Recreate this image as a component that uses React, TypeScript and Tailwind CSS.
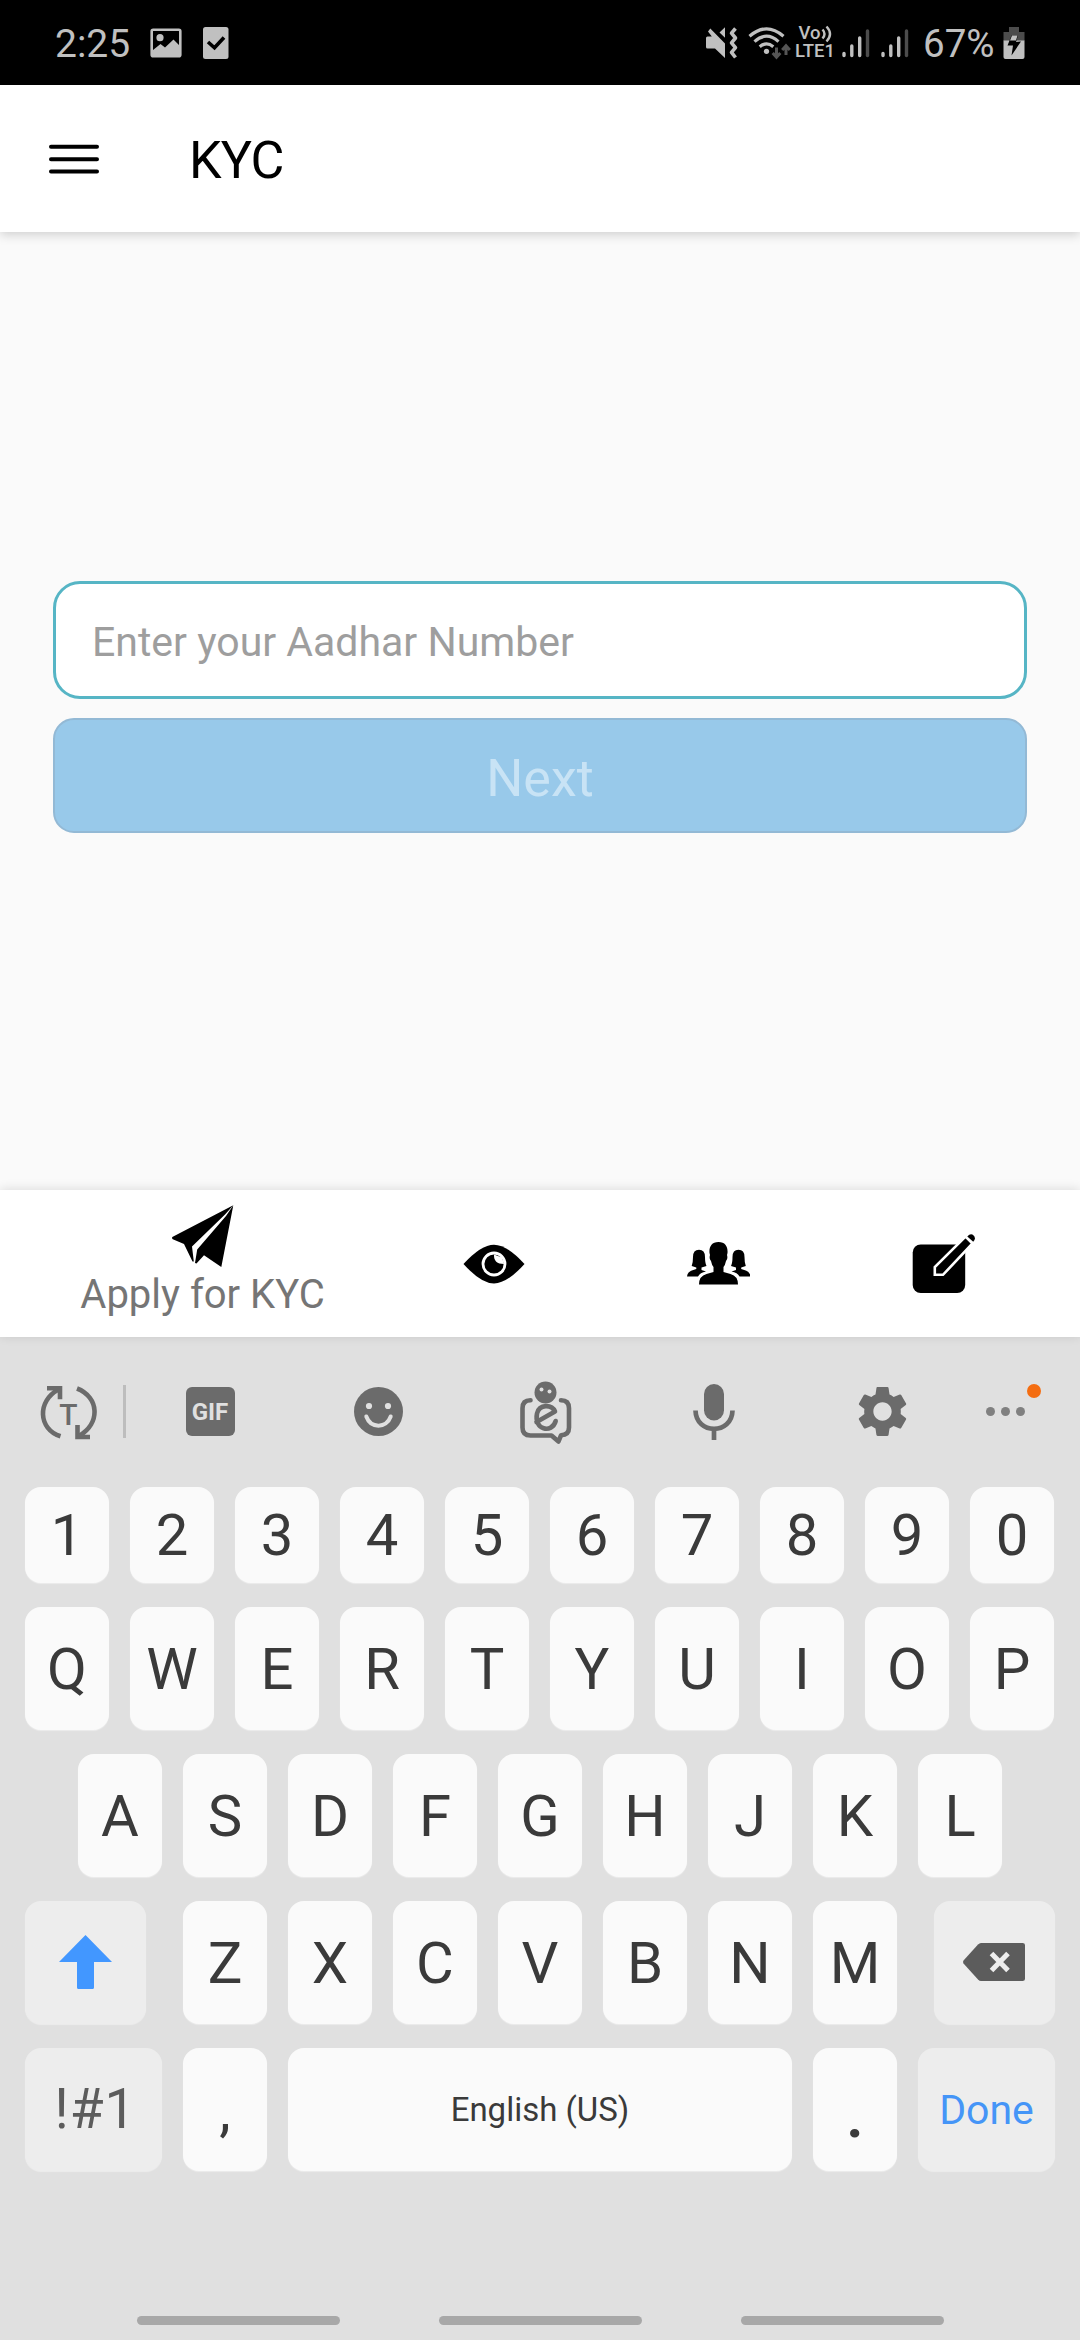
import React from "react";
import { MdSettings } from "react-icons/md";

const SignalBars = ({ className }: { className: string }) => (
  <svg className={className} width="28" height="32" viewBox="0 0 28 32" strokeWidth="3.4" strokeLinecap="round" fill="none">
    <path d="M2 26.500v2M9.800 19v9.500M17.700 11v17.500" stroke="#c0c0c0" />
    <path d="M25.500 4v24.500" stroke="#4c4c4c" />
  </svg>
);

function StatusBar() {
  return (
    <div className="flex h-[85px] items-center bg-black text-[39px] text-[#c0c0c0]">
      <span className="ml-[55px] w-[95px] pt-[3px] leading-none">2:25</span>
      <svg width="32" height="30" viewBox="0 0 32 30">
        <rect x="1.700" y="1.700" width="28.600" height="26.600" rx="1.500" fill="none" stroke="#c0c0c0" strokeWidth="2.600" />
        <circle cx="10" cy="9.700" r="3.600" fill="#c0c0c0" />
        <path d="M3 22l7.500-6 4.500 3.500 8.500-8 6 6V28H3z" fill="#c0c0c0" />
      </svg>
      <svg className="ml-[21px]" width="26" height="32" viewBox="0 0 26 32">
        <rect width="25.500" height="32" rx="2.500" fill="#c0c0c0" />
        <path d="M5 15l6.500 5.800L21 10.500" fill="none" stroke="#000" strokeWidth="3.600" />
      </svg>
      <svg className="ml-[477px]" width="32" height="34" viewBox="0 0 32 34">
        <path d="M1.500 10.500h4.300L2 5.500 4.300 2.500 19 17.500V32L9 22.500H1.500Q0 22.500 0 21v-9q0-1.500 1.500-1.500zM13.500 6.500L19 1.300v10.500z" fill="#c0c0c0" />
        <path d="M29.500 2.500l-4 4.700 4 4.800-4 4.800 4 4.800-4 4.700 4 5.200" fill="none" stroke="#c0c0c0" strokeWidth="3.600" strokeLinejoin="round" />
      </svg>
      <svg className="ml-[10px]" width="43" height="34" viewBox="0 0 43 34">
        <g fill="none" stroke="#c0c0c0" strokeWidth="3.200">
          <path d="M1.500 10.200Q18.500-4.500 35.500 10.200" />
          <path d="M6.500 15.600Q18.500 4.800 30.500 15.600" />
          <path d="M11.700 20.800Q18.500 15 25.300 20.800" />
        </g>
        <circle cx="18.500" cy="25.300" r="2.600" fill="#c0c0c0" />
        <path d="M28.500 21.500v8M24.700 27l3.800 4.200 3.800-4.200M38 29v-8M34.200 24L38 19.800l3.800 4.200" fill="none" stroke="#555" strokeWidth="3" />
      </svg>
      <div className="ml-[3px] flex w-[42px] flex-col items-center text-[18.500px] font-medium leading-[17.500px]">
        <span className="flex items-center">
          Vo
          <svg width="11" height="18" viewBox="0 0 11 18" fill="none" stroke="#c0c0c0" strokeWidth="2.400">
            <path d="M1.500 4.500q4 4.500 0 9M5.500 1.500q7 7.500 0 15" />
          </svg>
        </span>
        <span>LTE1</span>
      </div>
      <SignalBars className="ml-[6px]" />
      <SignalBars className="ml-[11px]" />
      <span className="ml-[14px] w-[79px] pt-[3px] text-[38.500px] leading-none">67%</span>
      <svg className="ml-[1px]" width="22" height="34" viewBox="0 0 22 34">
        <path d="M6 1h10v5h5.500v9H.500V6H6z" fill="#4c4c4c" />
        <path d="M.500 14.500h21V31q0 2-2 2h-17q-2 0-2-2z" fill="#c0c0c0" />
        <path d="M8.500 9.500h6.500l-2 6.500 5-.500L8.500 29.500l1.500-10H4.500z" fill="#000" />
        <path d="M9 9.500h5.500L13 14.500H7z" fill="#c0c0c0" />
      </svg>
    </div>
  );
}

const PlaneIcon = () => (
  <svg width="62" height="62" viewBox="172 1205 62 62">
    <path d="M233.300 1205.300L172.300 1237q-.600 1.300.500 2.300L184 1244l8.500 17.500h1.300l-1.800-15L225 1214.500z" />
    <path d="M233.300 1205.300L221.300 1267 204 1255.300l-7.500 8.200-1.500-.500 2.200-13.500L226 1216z" />
  </svg>
);

const EyeIcon = () => (
  <svg width="62" height="40" viewBox="0 0 62 40">
    <path d="M.500 20Q18 .700 31 .700T61.500 20Q44 39.500 31 39.500T.500 20z" />
    <circle cx="31" cy="20" r="11" fill="none" stroke="#fff" strokeWidth="2.800" />
    <path d="M31 10.500q-.500 9.500 10 9.500l-2-6.500z" fill="#fff" />
  </svg>
);

const PeopleIcon = () => (
  <svg width="63" height="43" viewBox="687 1242 63 43">
    <path d="M691.700 1266q1.300-3 1.300-9 0-7.200 6-7.200t6 7.200q0 6 1.500 9l-5 1.500v2.500l4.500 1.500q-6 1-8 5h-11q.500-5 5.500-6.300l3.800-1.200v-1.500z" />
    <path d="M745.800 1266q-1.300-3-1.300-9 0-7.200-6-7.200t-6 7.200q0 6-1.500 9l5 1.500v2.500l-4.500 1.500q6 1 8 5h11q-.500-5-5.500-6.300l-3.800-1.200v-1.500z" />
    <path d="M718.500 1242c-7 0-9.500 5-9 11l.500 2c-1 3 .2 4.500 1 6q.8 4 2.500 6v5l-7 2q-7.500 2-7.500 10.500h39q0-8.500-7.500-10.500l-7-2v-5q1.700-2 2.500-6c.8-1.500 2-3 1-6l.500-2c.5-6-2-11-9-11z" />
  </svg>
);

const EditIcon = () => (
  <svg width="64" height="60" viewBox="911 1234 64 60">
    <rect x="911.700" y="1244.500" width="52.500" height="48.500" rx="8" />
    <path d="M933.800 1274.800v-7.800L964.500 1236.500l7 7-29.500 31.300z" stroke="#fff" strokeWidth="2.600" />
    <path d="M966.300 1236.400q3.500-3.600 6.300-.900t-.400 6.300z" />
  </svg>
);

function BottomTabs() {
  return (
    <div className="relative flex h-[147px] items-center bg-white px-6 shadow-[0_-1px_10px_rgba(0,0,0,0.12)]">
      <div className="flex h-full w-[357px] flex-col items-center pt-[15px]">
        <PlaneIcon />
        <span className="mt-[4px] text-[40px] leading-[47px] text-[#757575]">Apply for KYC</span>
      </div>
      <div className="flex w-[225px] justify-center"><EyeIcon /></div>
      <div className="flex w-[225px] justify-center"><PeopleIcon /></div>
      <div className="flex w-[225px] justify-center"><EditIcon /></div>
    </div>
  );
}

const G = "#6b6b6b";

function Toolbar() {
  return (
    <div className="flex h-[150px] items-center pb-[1px]">
      <div className="flex w-[126px] items-center">
        <svg className="ml-[40px]" width="57" height="56" viewBox="40 1384 57 56">
          <g fill="none" stroke={G} strokeWidth="4.600">
            <path d="M60.500 1436.300C38 1429 37 1401 58.500 1389.500" />
            <path d="M77 1388.500C99 1397 101 1423 79 1436" />
            <path d="M47 1388.200H60v11" />
            <path d="M90 1437H77.500v-12" />
          </g>
          <text x="68.500" y="1425" textAnchor="middle" fontFamily="Roboto, sans-serif" fontSize="30" fontWeight="500" fill={G}>T</text>
        </svg>
        <div className="ml-[26px] h-[53px] w-[3px] bg-[#bdbdbd]" />
      </div>
      <div className="flex w-[168px] justify-center">
        <div className="flex h-[49px] w-[49px] items-center justify-center rounded-[6px] bg-[#6b6b6b] text-[24px] font-bold leading-none text-[#e0e0e0]">GIF</div>
      </div>
      <div className="flex w-[168px] justify-center">
        <svg width="49" height="49" viewBox="0 0 49 49">
          <circle cx="24.500" cy="24.500" r="24.500" fill={G} />
          <circle cx="15" cy="19" r="3.100" fill="#e0e0e0" />
          <circle cx="34" cy="19" r="3.100" fill="#e0e0e0" />
          <path d="M12.300 29.500c4.500 12.200 20 12.200 24.400 0" fill="none" stroke="#e0e0e0" strokeWidth="4" strokeLinecap="round" />
        </svg>
      </div>
      <div className="flex w-[168px] justify-center">
        <svg width="52" height="64" viewBox="519 1380 52 64">
          <circle cx="544.500" cy="1392.500" r="11" fill={G} />
          <circle cx="540.500" cy="1389.500" r="2" fill="#e0e0e0" />
          <circle cx="548.500" cy="1391.500" r="2" fill="#e0e0e0" />
          <g fill="none" stroke={G} strokeWidth="4.600" strokeLinecap="round" strokeLinejoin="round">
            <path d="M529.500 1400.300q-8 0-8 8V1427.500q0 8 8 8h21l7 6 2.500-6.200q8-.300 8-7.800v-19.200q0-8-8-8" />
            <path d="M535.500 1422L554 1411.500c-3-7-15.500-8-18 2-3.500 16.500 15 20.500 18.700 7.500" />
          </g>
        </svg>
      </div>
      <div className="flex w-[168px] justify-center">
        <svg width="42" height="56" viewBox="0 0 42 56">
          <rect x="11" y="0" width="20" height="36.500" rx="10" fill={G} />
          <path d="M2.500 26.500C3 51 39 51 39.500 26.500M21 45v11" fill="none" stroke={G} strokeWidth="4.700" />
        </svg>
      </div>
      <div className="flex w-[168px] justify-center">
        <MdSettings size={61} color={G} />
      </div>
      <div className="relative flex w-[114px] gap-[6px] pl-[20px]">
        <i className="h-[9px] w-[9px] rounded-full bg-[#808080]" />
        <i className="h-[9px] w-[9px] rounded-full bg-[#808080]" />
        <i className="h-[9px] w-[9px] rounded-full bg-[#808080]" />
        <i className="absolute top-[-23px] left-[61px] h-[14px] w-[14px] rounded-full bg-[#f46d11]" />
      </div>
    </div>
  );
}

const keyBase = "flex items-center justify-center rounded-[16px] shadow-[0_1px_1px_rgba(255,255,255,0.4)]";
const letter = keyBase + " w-[84px] bg-[#fafafa] text-[58px] leading-none text-[#3a3a3a]";
const fn = keyBase + " bg-[#ededed]";

const Keys = ({ chars }: { chars: string }) => (
  <>
    {chars.split("").map((c) => (
      <div key={c} className={letter}>{c}</div>
    ))}
  </>
);

function Keyboard() {
  return (
    <div className="flex h-[1003px] flex-col bg-[#e0e0e0]">
      <Toolbar />
      <div className="flex flex-col gap-6 px-[25px]">
        <div className="flex h-[96px] gap-[21px]"><Keys chars="1234567890" /></div>
        <div className="flex h-[123px] gap-[21px]"><Keys chars="QWERTYUIOP" /></div>
        <div className="flex h-[123px] justify-center gap-[21px]"><Keys chars="ASDFGHJKL" /></div>
        <div className="flex h-[123px] justify-between">
          <div className={fn + " w-[121px] pb-[1px]"}>
            <svg width="53" height="54" viewBox="0 0 53 54">
              <path d="M26.500 0L53 27H35v25.500q0 1.500-1.500 1.500h-14q-1.500 0-1.500-1.500V27H0z" fill="#4297ff" />
            </svg>
          </div>
          <div className="flex gap-[21px]"><Keys chars="ZXCVBNM" /></div>
          <div className={fn + " w-[121px] pb-[1px]"}>
            <svg className="mr-[1px]" width="62" height="38" viewBox="0 0 62 38">
              <path d="M18 0h41.500Q62 0 62 2v34q0 2-2.500 2H18q-1.500 0-3-1.500L.500 20.500Q-.300 19 .500 17.500L15 1.500Q16.500 0 18 0z" fill="#5c5c5c" />
              <path d="M28.500 10.500l16.500 17M45 10.500l-16.500 17" stroke="#ededed" strokeWidth="5" />
            </svg>
          </div>
        </div>
        <div className="flex h-[123px] gap-[21px]">
          <div className={fn + " w-[137px] pl-[4px] text-[55px] leading-none tracking-[1px] text-[#5c5c5c]"}>!#1</div>
          <div className={letter}>,</div>
          <div className={keyBase + " w-[504px] bg-[#fafafa] text-[33px] text-[#3a3a3a]"}>English (US)</div>
          <div className={letter + " pt-[14px] font-bold"}>.</div>
          <div className={fn + " w-[137px] pt-[2px] text-[41px] text-[#4595f7]"}>Done</div>
        </div>
      </div>
      <div className="mt-auto mb-[15px] flex justify-center gap-[99px]">
        <div className="h-[9px] w-[203px] rounded-full bg-[#a8a8a8]" />
        <div className="h-[9px] w-[203px] rounded-full bg-[#a8a8a8]" />
        <div className="h-[9px] w-[203px] rounded-full bg-[#a8a8a8]" />
      </div>
    </div>
  );
}

export default function App() {
  return (
    <div className="flex h-[2340px] w-[1080px] flex-col overflow-hidden bg-[#fafafa] font-['Roboto',sans-serif]">
      <StatusBar />
      <header className="flex h-[147px] items-center bg-white shadow-[0_3px_10px_rgba(0,0,0,0.17)]">
        <svg className="ml-[49px]" width="50" height="30" viewBox="0 0 50 30" stroke="#000" strokeWidth="4" strokeLinecap="round">
          <path d="M2 2.800h46M2 15.200h46M2 27.600h46" />
        </svg>
        <h1 className="ml-[90px] pt-[4px] text-[52px] leading-none tracking-[-0.800px] text-black">KYC</h1>
      </header>
      <main className="flex flex-1 flex-col gap-[19px] px-[53px] pt-[349px]">
        <div className="flex h-[118px] items-center rounded-[27px] border-[3px] border-[#56b5c5] bg-white pt-[5px] pl-[36px] text-[41px] text-[#9e9e9e]">
          Enter your Aadhar Number
        </div>
        <button className="flex h-[115px] items-center justify-center rounded-[21px] border-2 border-[#93b9d5] bg-[#98c9ea] pt-[6px] text-[52px] leading-none text-[#c8e3f5]">
          Next
        </button>
      </main>
      <BottomTabs />
      <Keyboard />
    </div>
  );
}
